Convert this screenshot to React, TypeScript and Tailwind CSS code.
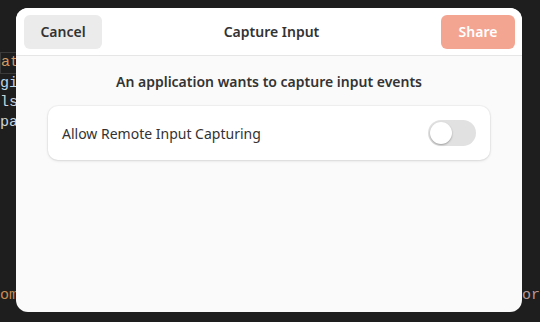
import React from "react";

export default function App() {
  return (
    <div className="relative w-[540px] h-[322px] overflow-hidden bg-[#1e1e1e]" style={{ fontFamily: '"Liberation Mono", monospace' }}>
      <div className="absolute left-0 top-[52px] flex flex-col text-[15px] leading-[19.5px]">
        <div className="border border-[#3a3a3a] text-[#d39a62] pr-4">ati</div>
        <div className="text-[#bcd6e6]">gi</div>
        <div className="text-[#c9d4da]">ls</div>
        <div className="text-[#c9d4da]">pa</div>
      </div>
      <div className="absolute left-[14px] top-[262px] text-[#8a8a8a] text-[12px]">'</div>
      <div className="absolute left-0 top-[285px] text-[15px] text-[#c78b54]">omm</div>
      <div className="absolute left-[522px] top-[285px] text-[15px] text-[#b69a9a]">or</div>

      <div
        className="absolute left-[16px] top-[8px] w-[506px] h-[304px] rounded-[12px] bg-[#fafafa] overflow-hidden flex flex-col"
        style={{ fontFamily: '"Noto Sans", "Open Sans", sans-serif' }}
      >
        <div className="h-[48px] bg-white border-b border-[#e6e6e6] flex items-center justify-between px-[8px] shrink-0">
          <button className="h-[34px] w-[78px] rounded-[6px] bg-[#ebebeb] text-[#333333] text-[14px] font-semibold">Cancel</button>
          <div className="text-[14px] font-semibold text-[#333333] mt-[-1px]">Capture Input</div>
          <button className="h-[34px] w-[74px] rounded-[6px] bg-[#f4a592] text-white text-[14px] font-semibold mr-[-1px]">Share</button>
        </div>
        <div className="pt-[16px] text-center text-[14px] font-semibold text-[#333333] leading-[20px]">
          An application wants to capture input events
        </div>
        <div className="mx-[32px] mt-[14px] h-[54px] bg-white rounded-[10px] shadow-[0_1px_3px_rgba(0,0,0,0.12),0_0_0_1px_rgba(0,0,0,0.03)] flex items-center justify-between pl-[14px] pr-[14px]">
          <span className="text-[14px] text-[#333333]">Allow Remote Input Capturing</span>
          <div className="w-[48px] h-[26px] rounded-full bg-[#e1e1e1] relative">
            <div className="absolute left-[2px] top-[2px] w-[22px] h-[22px] rounded-full bg-white shadow-[0_1px_2px_rgba(0,0,0,0.3)]" />
          </div>
        </div>
      </div>
    </div>
  );
}
